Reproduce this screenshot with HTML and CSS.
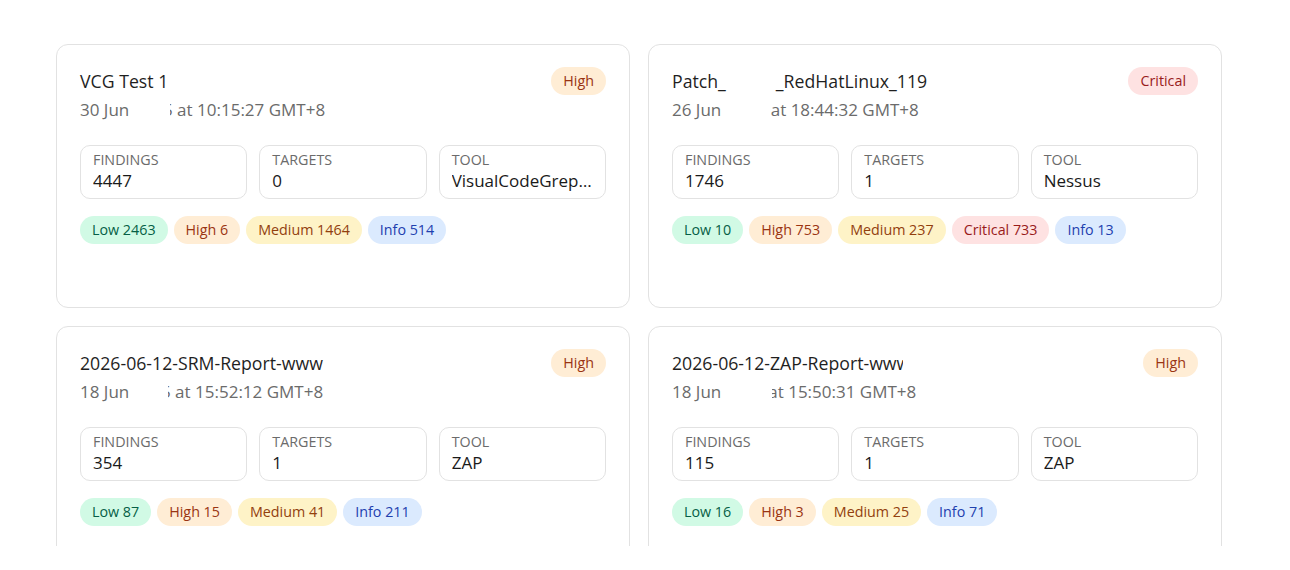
FILE: index.html
```html
<!DOCTYPE html>
<html lang="en">
<head>
<meta charset="utf-8">
<title>Reports</title>
<link rel="stylesheet" href="styles.css">
</head>
<body>
<div class="page">
  <div class="viewport">
    <div class="grid">
      <div class="card">
        <div class="card-head">
          <div class="meta">
            <div class="title">VCG Test 1</div>
            <div class="date">30 Jun <span class="gap gap-a"></span><span class="cut">5</span> at 10:15:27 GMT+8</div>
          </div>
          <span class="badge high">High</span>
        </div>
        <div class="stats">
          <div class="stat"><div class="label">Findings</div><div class="value">4447</div></div>
          <div class="stat"><div class="label">Targets</div><div class="value">0</div></div>
          <div class="stat"><div class="label">Tool</div><div class="value">VisualCodeGrepper</div></div>
        </div>
        <div class="chips">
          <span class="chip low">Low 2463</span>
          <span class="chip high">High 6</span>
          <span class="chip medium">Medium 1464</span>
          <span class="chip info">Info 514</span>
        </div>
      </div>

      <div class="card">
        <div class="card-head">
          <div class="meta">
            <div class="title">Patch_<span class="gap gap-t"></span>_RedHatLinux_119</div>
            <div class="date">26 Jun <span class="gap gap-b"></span>at 18:44:32 GMT+8</div>
          </div>
          <span class="badge critical">Critical</span>
        </div>
        <div class="stats">
          <div class="stat"><div class="label">Findings</div><div class="value">1746</div></div>
          <div class="stat"><div class="label">Targets</div><div class="value">1</div></div>
          <div class="stat"><div class="label">Tool</div><div class="value">Nessus</div></div>
        </div>
        <div class="chips">
          <span class="chip low">Low 10</span>
          <span class="chip high">High 753</span>
          <span class="chip medium">Medium 237</span>
          <span class="chip critical">Critical 733</span>
          <span class="chip info">Info 13</span>
        </div>
      </div>

      <div class="card">
        <div class="card-head">
          <div class="meta">
            <div class="title">2026-06-12-SRM-Report-www</div>
            <div class="date">18 Jun <span class="gap gap-c"></span><span class="cut">5</span> at 15:52:12 GMT+8</div>
          </div>
          <span class="badge high">High</span>
        </div>
        <div class="stats">
          <div class="stat"><div class="label">Findings</div><div class="value">354</div></div>
          <div class="stat"><div class="label">Targets</div><div class="value">1</div></div>
          <div class="stat"><div class="label">Tool</div><div class="value">ZAP</div></div>
        </div>
        <div class="chips">
          <span class="chip low">Low 87</span>
          <span class="chip high">High 15</span>
          <span class="chip medium">Medium 41</span>
          <span class="chip info">Info 211</span>
        </div>
      </div>

      <div class="card">
        <div class="card-head">
          <div class="meta">
            <div class="title"><span class="title-clip">2026-06-12-ZAP-Report-www</span></div>
            <div class="date">18 Jun <span class="gap gap-d"></span><span class="cut-a">a</span>t 15:50:31 GMT+8</div>
          </div>
          <span class="badge high">High</span>
        </div>
        <div class="stats">
          <div class="stat"><div class="label">Findings</div><div class="value">115</div></div>
          <div class="stat"><div class="label">Targets</div><div class="value">1</div></div>
          <div class="stat"><div class="label">Tool</div><div class="value">ZAP</div></div>
        </div>
        <div class="chips">
          <span class="chip low">Low 16</span>
          <span class="chip high">High 3</span>
          <span class="chip medium">Medium 25</span>
          <span class="chip info">Info 71</span>
        </div>
      </div>
    </div>
  </div>
</div>
</body>
</html>
```

FILE: styles.css
```css
* { box-sizing: border-box; }

html, body {
  margin: 0;
  padding: 0;
  background: #ffffff;
}

body {
  font-family: "Open Sans", "Liberation Sans", sans-serif;
  color: #1f1f1f;
}

.page {
  padding: 44px 0 0 56px;
}

.viewport {
  height: 502px;
  overflow: hidden;
}

.grid {
  display: grid;
  grid-template-columns: 574px 574px;
  gap: 18px;
}

.card {
  height: 264px;
  border: 1px solid #e2e2e2;
  border-radius: 12px;
  padding: 22px 23px 0 23px;
  background: #fff;
}

.card-head {
  display: flex;
  justify-content: space-between;
  align-items: flex-start;
}

.title {
  font-size: 17.7px;
  line-height: 28px;
  color: #1f1f1f;
  white-space: nowrap;
}

.date {
  margin-top: 1px;
  font-size: 17px;
  line-height: 28px;
  color: #6b6b6b;
  white-space: nowrap;
}

.gap {
  display: inline-block;
  height: 1px;
}
.gap-a { width: 36px; }
.gap-b { width: 45px; }
.gap-c { width: 34px; }
.gap-d { width: 46px; }
.gap-t { width: 50px; }

.cut {
  display: inline-block;
  width: 3px;
  overflow: hidden;
  direction: rtl;
  vertical-align: bottom;
}
.cut-a {
  display: inline-block;
  width: 6px;
  overflow: hidden;
  direction: rtl;
  vertical-align: bottom;
}

.title-clip {
  display: inline-block;
  width: 231px;
  overflow: hidden;
  vertical-align: bottom;
}

.badge {
  display: inline-block;
  height: 28px;
  line-height: 28px;
  padding: 0 12px;
  border-radius: 14px;
  font-size: 14.3px;
}

.stats {
  display: grid;
  grid-template-columns: repeat(3, 1fr);
  gap: 12px;
  margin-top: 21px;
}

.stat {
  border: 1px solid #e2e2e2;
  border-radius: 10px;
  padding: 4px 11px 5px 12px;
  height: 54px;
  min-width: 0;
}

.label {
  font-size: 14.3px;
  line-height: 20px;
  color: #6b6b6b;
  text-transform: uppercase;
}

.value {
  font-size: 17px;
  line-height: 22px;
  color: #1a1a1a;
  white-space: nowrap;
  overflow: hidden;
  text-overflow: ellipsis;
}

.chips {
  display: flex;
  flex-wrap: wrap;
  gap: 6px;
  margin-top: 17px;
}

.chip {
  display: inline-block;
  height: 28px;
  line-height: 28px;
  padding: 0 12px;
  border-radius: 14px;
  font-size: 14.3px;
}

.low { background: #d1fae5; color: #065f46; }
.high { background: #ffedd5; color: #9a3412; }
.medium { background: #fef3c7; color: #92400e; }
.critical { background: #fee2e2; color: #991b1b; }
.info { background: #dbeafe; color: #1e40af; }
```
